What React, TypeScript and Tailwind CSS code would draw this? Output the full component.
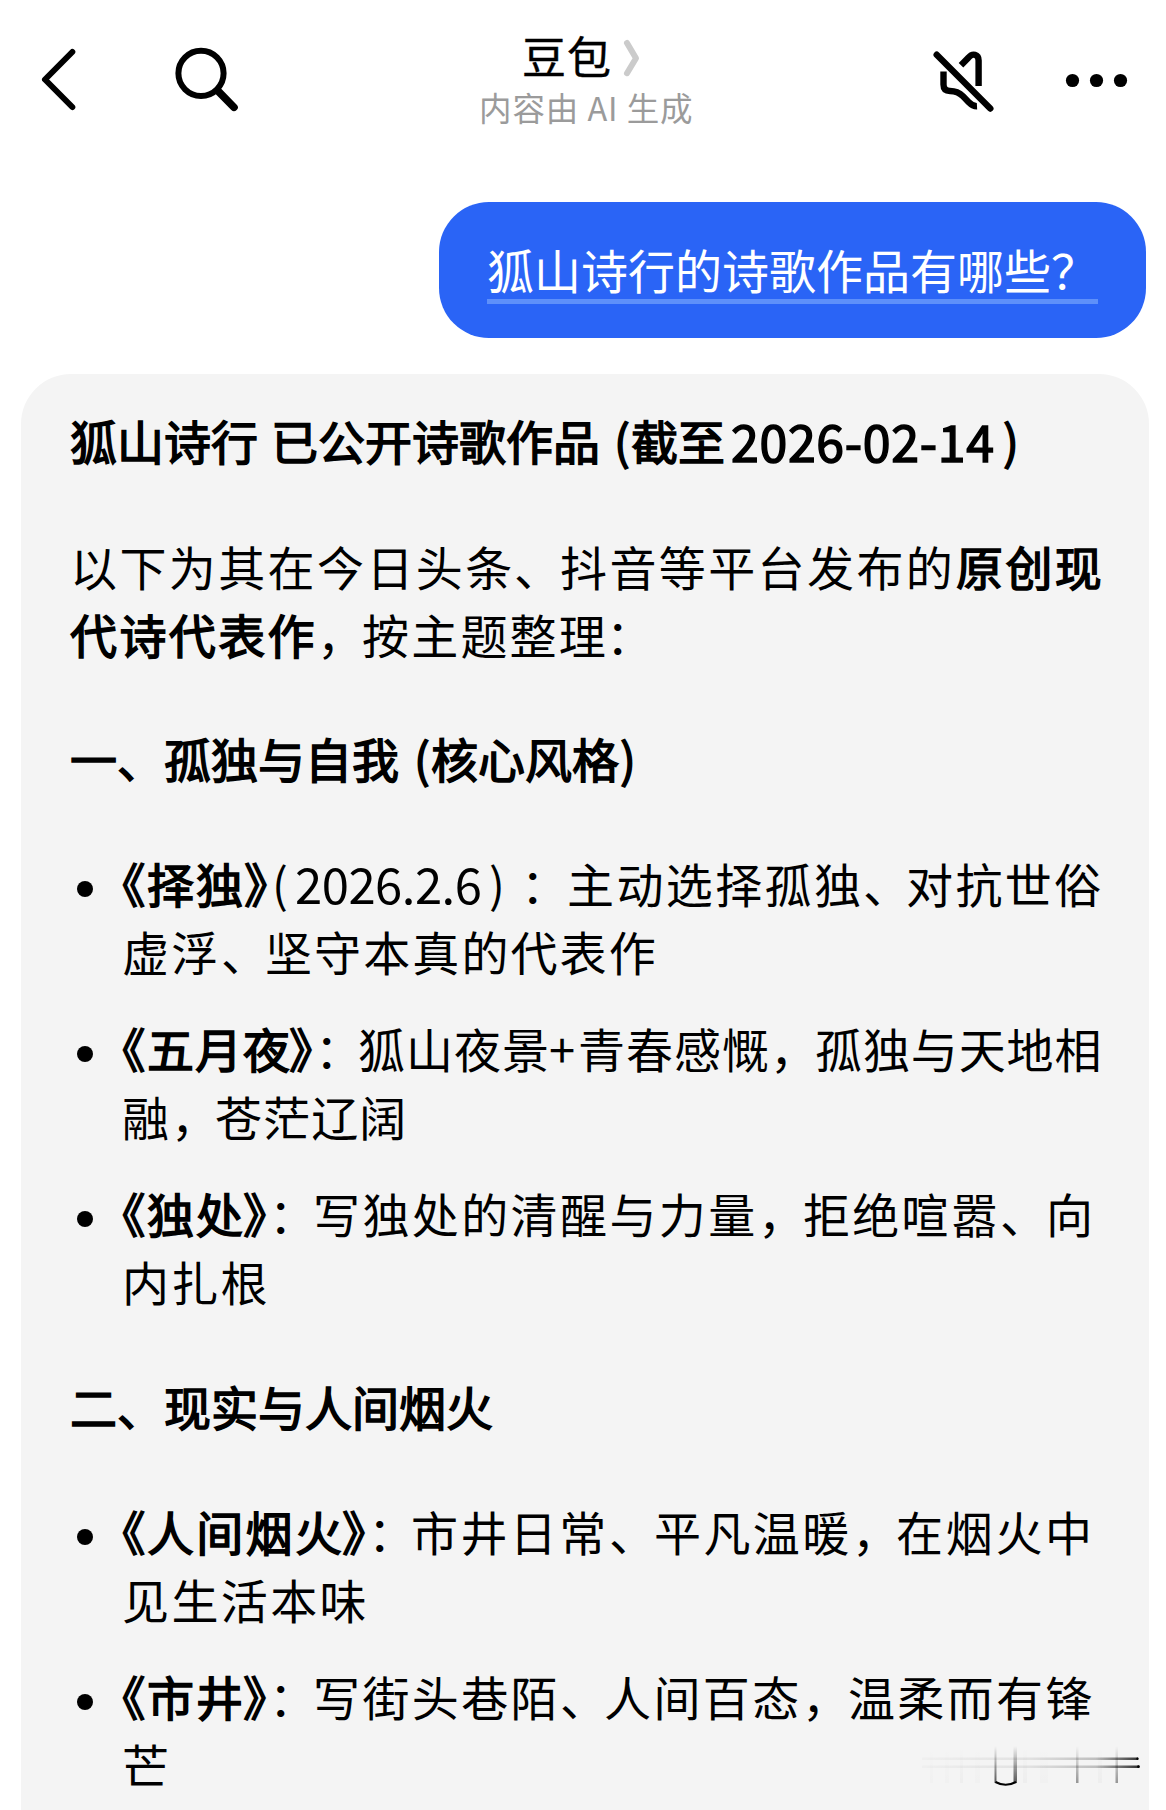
import React from "react";

type Segment = {
  text: string;
  className?: string;
  bold?: boolean;
};

const intro: Segment[][] = [
  [
    { text: "以下为其在今日头条", className: "w-[444px] tracking-[2.4px]" },
    { text: "、", className: "w-[46px]" },
    { text: "抖音等平台发布的", className: "w-[396px] tracking-[2.4px]" },
    { text: "原创现", className: "tracking-[2.4px]", bold: true },
  ],
  [
    { text: "代诗代表作", className: "w-[247px] tracking-[2.4px]", bold: true },
    { text: "，", className: "w-[45px]" },
    { text: "按主题整理", className: "w-[244px] tracking-[2.2px]" },
    { text: "：" },
  ],
];

const open = { text: "《", className: "w-[25px] [font-feature-settings:'halt']", bold: true };
const close = { text: "》", className: "w-[26px] [font-feature-settings:'halt']", bold: true };

const solitude: Segment[][][] = [
  [
    [
      open,
      { text: "择独", className: "w-[97px] tracking-[2px]", bold: true },
      close,
      { text: "(", className: "w-[25px] pl-[2px]" },
      { text: "2026.2.6", className: "w-[192px] text-[49px] tracking-[-0.5px]" },
      { text: ")", className: "w-[34px] pl-[2px]" },
      { text: "：", className: "w-[46px]" },
      { text: "主动选择孤独", className: "w-[296px] tracking-[2.4px]" },
      { text: "、", className: "w-[43px]" },
      { text: "对抗世俗", className: "tracking-[2.4px]" },
    ],
    [
      { text: "虚浮", className: "w-[99px] tracking-[2.3px]" },
      { text: "、", className: "w-[44px]" },
      { text: "坚守本真的代表作", className: "tracking-[2.1px]" },
    ],
  ],
  [
    [
      open,
      { text: "五月夜", className: "w-[142px] tracking-[1px]", bold: true },
      close,
      { text: "：", className: "w-[43px]" },
      { text: "狐山夜景", className: "w-[191px] tracking-[1px]" },
      { text: "+", className: "w-[29px]" },
      { text: "青春感慨", className: "w-[192px] tracking-[1px]" },
      { text: "，", className: "w-[45px]" },
      { text: "孤独与天地相", className: "tracking-[0.9px]" },
    ],
    [
      { text: "融", className: "w-[49px]" },
      { text: "，", className: "w-[44px]" },
      { text: "苍茫辽阔", className: "tracking-[1.1px]" },
    ],
  ],
  [
    [
      open,
      { text: "独处", className: "w-[96px] tracking-[2px]", bold: true },
      close,
      { text: "：", className: "w-[44px]" },
      { text: "写独处的清醒与力量", className: "w-[445px] tracking-[2.4px]" },
      { text: "，", className: "w-[45px]" },
      { text: "拒绝喧嚣", className: "w-[197px] tracking-[2.3px]" },
      { text: "、", className: "w-[46px]" },
      { text: "向" },
    ],
    [{ text: "内扎根", className: "tracking-[2.2px]" }],
  ],
];

const reality: Segment[][][] = [
  [
    [
      open,
      { text: "人间烟火", className: "w-[195px] tracking-[2.3px]", bold: true },
      close,
      { text: "：", className: "w-[43px]" },
      { text: "市井日常", className: "w-[198px] tracking-[2.4px]" },
      { text: "、", className: "w-[45px]" },
      { text: "平凡温暖", className: "w-[198px] tracking-[2.4px]" },
      { text: "，", className: "w-[44px]" },
      { text: "在烟火中", className: "tracking-[2.7px]" },
    ],
    [{ text: "见生活本味", className: "tracking-[2.4px]" }],
  ],
  [
    [
      open,
      { text: "市井", className: "w-[96px] tracking-[2px]", bold: true },
      close,
      { text: "：", className: "w-[44px]" },
      { text: "写街头巷陌", className: "w-[247px] tracking-[2.4px]" },
      { text: "、", className: "w-[44px]" },
      { text: "人间百态", className: "w-[198px] tracking-[2.4px]" },
      { text: "，", className: "w-[46px]" },
      { text: "温柔而有锋", className: "tracking-[2.3px]" },
    ],
    [{ text: "芒" }],
  ],
];

// Bold runs use a text stroke, which lands between the regular and bold weights
const Line = ({ segments }: { segments: Segment[] }) => (
  <div className="flex h-[68px] whitespace-nowrap">
    {segments.map((segment, index) => (
      <span
        key={index}
        className={`shrink-0 ${segment.bold ? "[-webkit-text-stroke-width:1.5px]" : ""} ${segment.className ?? ""}`}
      >
        {segment.text}
      </span>
    ))}
  </div>
);

const PoemList = ({ items }: { items: Segment[][][] }) => (
  <ul className="flex flex-col gap-[29px]">
    {items.map((lines, index) => (
      <li key={index} className="flex">
        <span className="ml-[7px] mt-[32px] mr-[29px] size-4 shrink-0 rounded-full bg-black" />
        <div>
          {lines.map((segments, i) => (
            <Line key={i} segments={segments} />
          ))}
        </div>
      </li>
    ))}
  </ul>
);

const Header = () => (
  <header className="flex h-[201px] shrink-0 items-start">
    {/* Back and search */}
    <div className="flex w-[458px] shrink-0">
      <svg className="ml-[36px] mt-[44px]" width="44" height="70" viewBox="36 44 44 70" fill="none" stroke="#000" strokeWidth="6" strokeLinecap="round" strokeLinejoin="round">
        <path d="M72.3 52 45 79.5 72.3 107" />
      </svg>
      <svg className="ml-[90px] mt-[44px]" width="74" height="70" viewBox="170 44 74 70" fill="none" stroke="#000" strokeLinecap="round">
        <circle cx="201" cy="73.3" r="22.6" strokeWidth="6" />
        <path d="M218.5 91.5 234 107.3" strokeWidth="7.6" />
      </svg>
    </div>

    {/* Title */}
    <div className="flex flex-col items-start pt-[25px]">
      <div className="flex h-[60px] items-center pl-[64px]">
        <span className="text-[44px] leading-[60px] tracking-[1px] text-black [-webkit-text-stroke-width:0.4px]">豆包</span>
        <svg className="ml-[10px] mt-[6px]" width="20" height="44" viewBox="622 36 20 44" fill="none" stroke="#cbcbcb" strokeWidth="6" strokeLinecap="round" strokeLinejoin="round">
          <path d="M627 43 636 58.3 627 73.2" />
        </svg>
      </div>
      <div className="pl-[21px] text-[32.5px] leading-[43px] tracking-[0.9px] text-[#9b9b9b]">内容由 AI 生成</div>
    </div>

    {/* Mute and more */}
    <div className="ml-auto flex">
      <svg className="mt-[44px]" width="70" height="74" viewBox="928 44 70 74" fill="none" stroke="#000" strokeWidth="6.4">
        <path d="M936.7 54.7 990.3 108.6" strokeLinecap="round" />
        <path d="M961 65.3 968.3 57.8C972.6 52.6 978.6 54.2 978.6 60.5V86" />
        <path d="M943.5 71.5V84.5Q943.5 91 950 91C955.5 91 959 92.3 963 96.3L968.5 102Q973 106.5 977 106.3" />
      </svg>
      <svg className="ml-[62px] mr-[36px] mt-[70px]" width="70" height="20" viewBox="1060 70 70 20">
        <circle cx="1072.5" cy="80.5" r="6.6" />
        <circle cx="1096.5" cy="80.5" r="6.6" />
        <circle cx="1120.5" cy="80.5" r="6.6" />
      </svg>
    </div>
  </header>
);

// Faint strokes left in the lower right corner
const Watermark = () => (
  <svg className="absolute bottom-[20px] right-[20px]" width="226" height="50" viewBox="920 1740 226 50" fill="none">
    <defs>
      <linearGradient id="fade-x" gradientUnits="userSpaceOnUse" x1="922" y1="0" x2="1139" y2="0">
        <stop offset="0" stopColor="#000" stopOpacity="0.02" />
        <stop offset="0.5" stopColor="#000" stopOpacity="0.08" />
        <stop offset="0.8" stopColor="#000" stopOpacity="0.22" />
        <stop offset="1" stopColor="#000" stopOpacity="0.8" />
      </linearGradient>
      <linearGradient id="fade-y" gradientUnits="userSpaceOnUse" x1="0" y1="1746" x2="0" y2="1783">
        <stop offset="0" stopColor="#000" stopOpacity="0" />
        <stop offset="1" stopColor="#000" stopOpacity="0.65" />
      </linearGradient>
    </defs>
    <g fill="url(#fade-x)">
      <rect x="922" y="1757.5" width="216" height="2.5" />
      <rect x="922" y="1765.5" width="217" height="2.5" />
    </g>
    <g fill="url(#fade-y)">
      <rect x="994.5" y="1746" width="2" height="37" />
      <rect x="1013.5" y="1746" width="3.5" height="37" />
      <rect x="1076" y="1746" width="2.5" height="37" opacity="0.6" />
      <rect x="1115.5" y="1746" width="2.5" height="37" opacity="0.6" />
      <rect x="930" y="1750" width="3" height="33" opacity="0.02" />
      <rect x="945" y="1750" width="4" height="33" opacity="0.02" />
      <rect x="960" y="1750" width="3" height="33" opacity="0.04" />
      <rect x="975" y="1750" width="5" height="33" opacity="0.02" />
      <rect x="1023" y="1750" width="4" height="33" opacity="0.04" />
      <rect x="1040" y="1750" width="8" height="33" opacity="0.02" />
      <rect x="1098" y="1750" width="4" height="33" opacity="0.04" />
    </g>
    <path d="M995.5 1782Q1005.5 1787.5 1016 1782" stroke="#000" strokeWidth="2.2" />
    <circle cx="1137.5" cy="1758.7" r="1.2" fill="#000" />
    <circle cx="1138.5" cy="1766.7" r="1.4" fill="#000" />
  </svg>
);

const App = () => {
  return (
    <div className="relative flex h-[1810px] w-[1166px] flex-col overflow-hidden bg-white font-['Noto_Sans_CJK_SC',sans-serif] text-black">
      <Header />

      {/* Question */}
      <div className="mr-[20px] mt-px flex h-[136px] w-[707px] shrink-0 items-start self-end rounded-[50px] bg-[#2a64f6] pl-[48px] pt-[33px]">
        <div className="h-[69px] w-[611px] border-b-[5px] border-[#5e90fa] text-[47px] leading-[68px] text-white">
          狐山诗行的诗歌作品有哪些？
        </div>
      </div>

      {/* Answer */}
      <main className="ml-[21px] mt-[36px] h-[1500px] w-[1128px] shrink-0 rounded-t-[50px] bg-[#f4f4f4] pl-[49px] pt-[32px] text-[47px] leading-[68px]">
        <h1>
          <Line
            segments={[
              { text: "狐山诗行", className: "w-[201px]", bold: true },
              { text: "已公开诗歌作品", className: "w-[343px]", bold: true },
              { text: "(", className: "w-[17px]", bold: true },
              { text: "截至", className: "w-[100px]", bold: true },
              { text: "2026-02-14", className: "w-[272px] text-[50px] tracking-[0.7px]", bold: true },
              { text: ")", bold: true },
            ]}
          />
        </h1>

        <div className="mt-[58px]">
          {intro.map((segments, index) => (
            <Line key={index} segments={segments} />
          ))}
        </div>

        <h2 className="mt-[56px]">
          <Line
            segments={[
              { text: "一、孤独与自我", className: "w-[344px]", bold: true },
              { text: "(", className: "w-[17px]", bold: true },
              { text: "核心风格", className: "w-[189px]", bold: true },
              { text: ")", bold: true },
            ]}
          />
        </h2>
        <div className="mt-[57px]">
          <PoemList items={solitude} />
        </div>

        <h2 className="mt-[57px]">
          <Line segments={[{ text: "二、现实与人间烟火", bold: true }]} />
        </h2>
        <div className="mt-[57px]">
          <PoemList items={reality} />
        </div>
      </main>

      <Watermark />
    </div>
  );
};

export default App;
